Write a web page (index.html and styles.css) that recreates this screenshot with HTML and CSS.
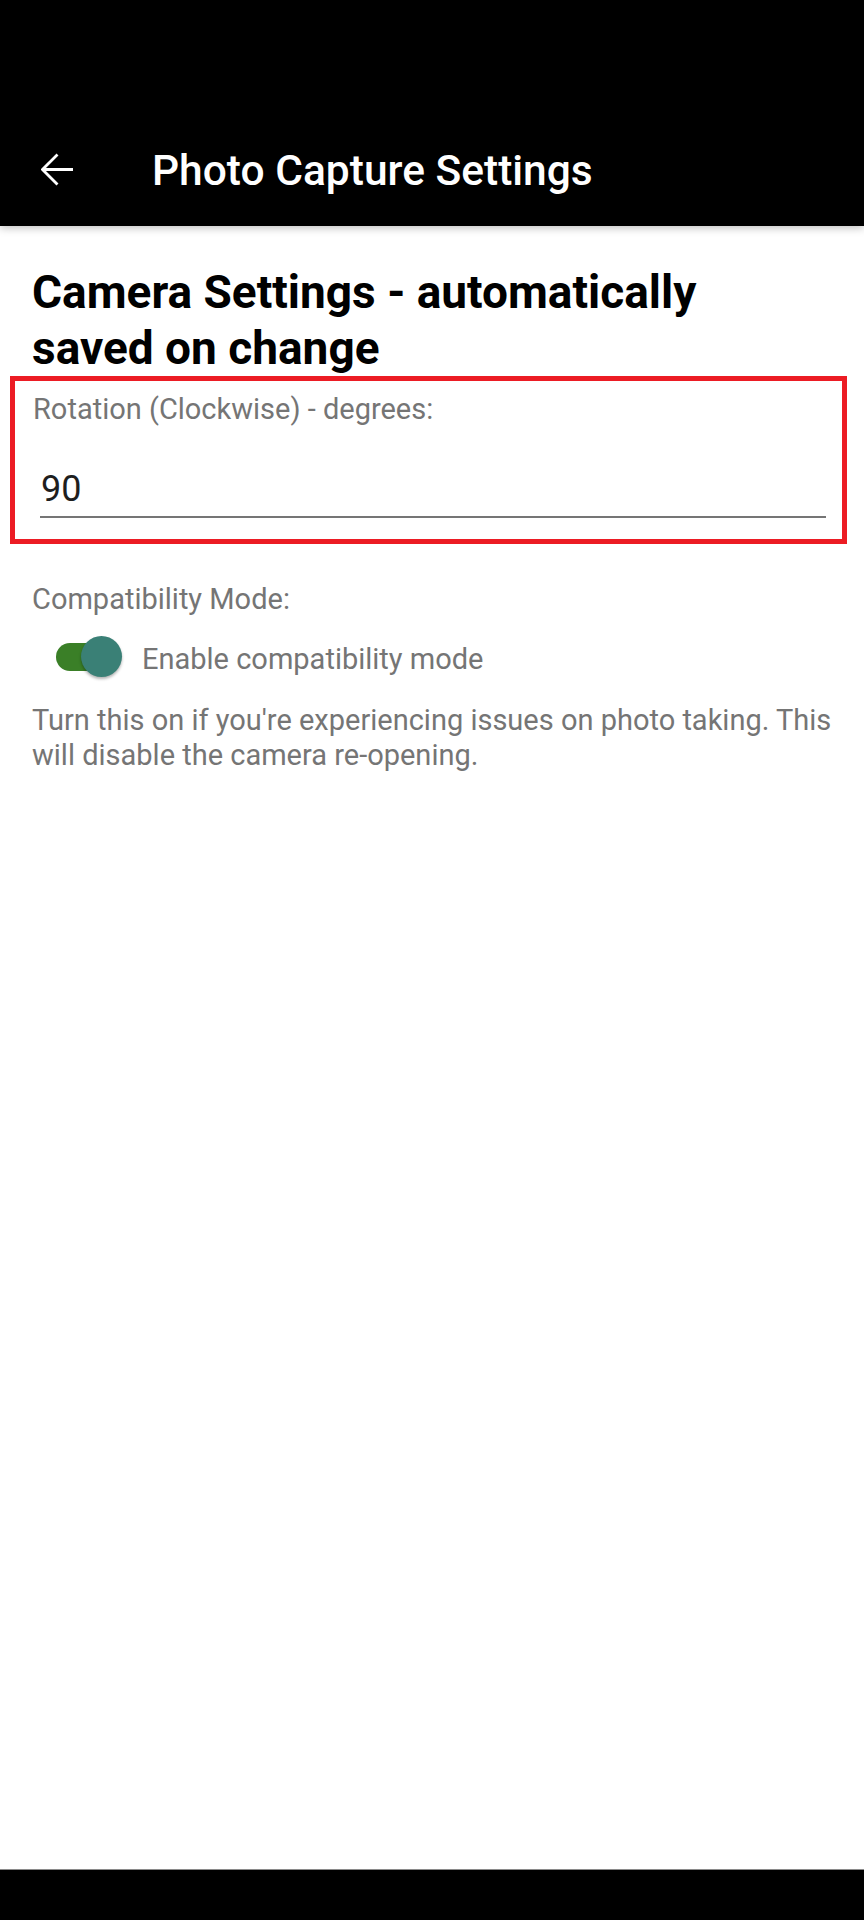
FILE: index.html
```html
<!DOCTYPE html>
<html lang="en">
<head>
	<meta charset="UTF-8">
	<title>Photo Capture Settings</title>
	<link rel="stylesheet" href="styles.css">
</head>
<body>
	<div class="status"></div>
	<div class="toolbar">
		<svg class="back" viewBox="0 0 33 33" width="33" height="33">
			<path d="M1.5 16.5H32M16.5 1.5L1.5 16.5L16.5 31.5" fill="none" stroke="#fff" stroke-width="2.8"/>
		</svg>
		<div class="title">Photo Capture Settings</div>
	</div>
	<div class="content">
		<h1 class="heading">Camera Settings - automatically saved on change</h1>

		<div class="highlight">
			<div class="label">Rotation (Clockwise) - degrees:</div>
			<div class="field">90</div>
		</div>

		<div class="label compat">Compatibility Mode:</div>
		<div class="switch-row">
			<div class="switch">
				<div class="track"></div>
				<div class="thumb"></div>
			</div>
			<span class="switch-text">Enable compatibility mode</span>
		</div>
		<p class="desc">Turn this on if you're experiencing issues on photo taking. This will disable the camera re-opening.</p>
	</div>
	<div class="navbar"></div>
</body>
</html>
```

FILE: styles.css
```css
* { margin: 0; padding: 0; box-sizing: border-box; }
body {
	background-color: #fff;
	font-family: Roboto, "Liberation Sans", sans-serif;
	height: 1920px;
	display: flex;
	flex-direction: column;
}
.status {
	height: 116px;
	background-color: #000;
}
.toolbar {
	height: 110px;
	background-color: #000;
	display: flex;
	align-items: center;
	padding-left: 41px;
	position: relative;
	box-shadow: 0 2px 8px rgba(0, 0, 0, 0.25);
	z-index: 1;
}
.back {
	display: block;
	margin-top: -4px;
}
.title {
	color: #fff;
	font-size: 42.5px;
	font-weight: 500;
	margin-left: 78px;
	margin-top: -2px;
}
.content {
	flex: 1;
	padding: 38px 16px 0 0;
}
.heading {
	font-size: 46px;
	line-height: 56px;
	font-weight: 700;
	color: #000;
	margin-left: 32px;
	max-width: 780px;
}
.highlight {
	margin: 0 0 0 10px;
	width: 837px;
	height: 168px;
	border: 5px solid #ec1c24;
	padding: 12px 16px 0 18px;
}
.label {
	font-size: 29px;
	line-height: 32px;
	color: #757575;
}
.field {
	margin: 42px 0 0 7px;
	padding: 0 0 5px 1px;
	font-size: 36px;
	line-height: 44px;
	color: #1e1e1e;
	border-bottom: 2px solid #757575;
	height: 51px;
}
.compat {
	margin: 39px 0 0 32px;
}
.switch-row {
	display: flex;
	align-items: center;
	height: 48px;
	margin: 18px 0 0 56px;
}
.switch {
	width: 66px;
	height: 48px;
	position: relative;
}
.track {
	position: absolute;
	left: 0;
	top: 10px;
	width: 60px;
	height: 28px;
	border-radius: 14px;
	background-color: #3a7f27;
}
.thumb {
	position: absolute;
	left: 25px;
	top: 3px;
	width: 41px;
	height: 41px;
	border-radius: 50%;
	background-color: #3a8076;
	box-shadow: 0 2px 3px rgba(0, 0, 0, 0.3);
}
.switch-text {
	margin: 3px 0 0 20px;
	font-size: 29px;
	color: #757575;
}
.desc {
	margin: 22px 0 0 32px;
	font-size: 29px;
	line-height: 35px;
	color: #757575;
}
.navbar {
	height: 51px;
	background-color: #000;
	border-top: 1px solid #8a8a8a;
}
```
